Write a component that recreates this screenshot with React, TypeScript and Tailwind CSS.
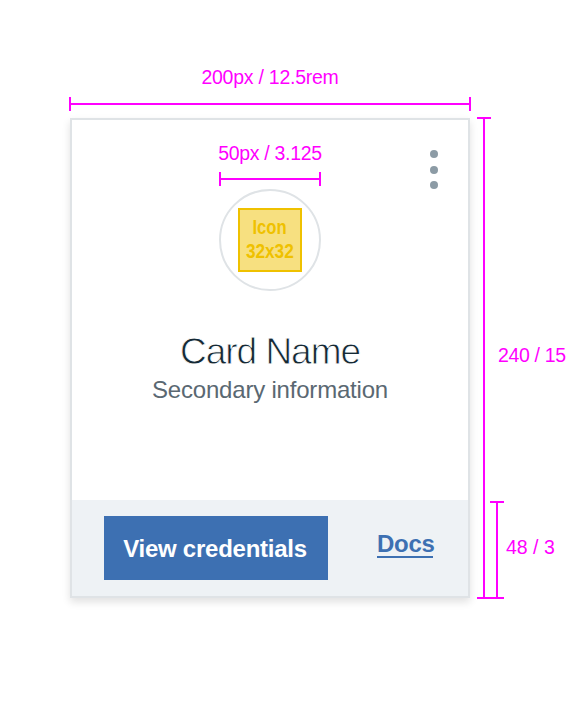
import React from "react";

function HorizontalRuler({ width }: { width: string }) {
  return (
    <div className={`flex h-[14px] items-center ${width}`}>
      <i className="h-full w-[2px] bg-[#ff00ff]" />
      <i className="h-[2px] flex-1 bg-[#ff00ff]" />
      <i className="h-full w-[2px] bg-[#ff00ff]" />
    </div>
  );
}

function VerticalRuler({ height }: { height: string }) {
  return (
    <div className={`flex w-[14px] flex-col items-center ${height}`}>
      <i className="h-[2px] w-full bg-[#ff00ff]" />
      <i className="w-[2px] flex-1 bg-[#ff00ff]" />
      <i className="h-[2px] w-full bg-[#ff00ff]" />
    </div>
  );
}

function Card() {
  return (
    <section className="flex h-[480px] w-[400px] shrink-0 flex-col border-2 border-[#dfe3e6] bg-white shadow-[0_4px_8px_rgba(0,0,0,0.12)]">
      <div className="flex h-[380px] flex-col items-center">
        <header className="grid h-[169px] w-full grid-cols-[1fr_102px_1fr]">
          <span />
          <div className="flex flex-col items-center pt-[22px]">
            <span className="h-[22px] whitespace-nowrap text-[19.5px] leading-[22px] tracking-[-0.3px] text-[#ff00ff]">50px / 3.125</span>
            <div className="mt-[8px]">
              <HorizontalRuler width="w-[102px]" />
            </div>
            <div className="mt-[3px] flex size-[102px] shrink-0 items-center justify-center rounded-full border-2 border-[#dfe3e6]">
              <div className="flex size-16 flex-col items-center justify-center border-2 border-[#efc100] bg-[#f7e080] pb-[2px] text-[20px] leading-6 font-bold text-[#efc100]">
                <span className="scale-x-[0.83]">Icon</span>
                <span className="scale-x-[0.86]">32x32</span>
              </div>
            </div>
          </div>
          <button className="mt-[30px] mr-[30px] flex h-[39px] w-2 flex-col justify-between justify-self-end" aria-label="More options">
            <i className="size-2 rounded-full bg-[#8c9ba5]" />
            <i className="size-2 rounded-full bg-[#8c9ba5]" />
            <i className="size-2 rounded-full bg-[#8c9ba5]" />
          </button>
        </header>
        <h1 className="mt-[42px] text-[37px] leading-[42px] font-normal tracking-[-1px] text-[#152935] [-webkit-text-stroke:0.8px_white]">Card Name</h1>
        <p className="mt-[3px] text-[24px] leading-7 tracking-[-0.2px] text-[#5a6872]">Secondary information</p>
      </div>
      <footer className="flex h-24 bg-[#eef2f5] pt-4 pl-8">
        <button className="h-16 w-56 bg-[#3d70b2] pt-[2px] pr-[2px] text-[24px] leading-7 font-bold tracking-[-0.25px] text-white">View credentials</button>
        <a className="mt-[14px] ml-[49px] h-7 w-14 border-b-2 border-[#3d70b2] text-[24px] leading-7 font-bold tracking-[-0.3px] whitespace-nowrap text-[#3d70b2]">Docs</a>
      </footer>
    </section>
  );
}

export default function App() {
  return (
    <main className="h-[716px] w-[580px] overflow-hidden bg-white pt-[66px] font-['Liberation_Sans',Arial,sans-serif]">
      <div className="ml-[69px] flex w-[402px] flex-col items-center">
        <span className="h-[22px] text-[19.5px] leading-[22px] tracking-[-0.25px] text-[#ff00ff]">200px / 12.5rem</span>
        <div className="mt-[9px]">
          <HorizontalRuler width="w-[402px]" />
        </div>
      </div>
      <div className="mt-[6px] ml-[70px] flex h-[482px]">
        <div className="pt-px">
          <Card />
        </div>
        <div className="ml-[7px]">
          <VerticalRuler height="h-[482px]" />
        </div>
        <div className="-ml-px flex flex-col">
          <span className="mt-[227px] ml-[8px] h-[22px] whitespace-nowrap text-[19.5px] leading-[22px] tracking-[-0.35px] text-[#ff00ff]">240 / 15</span>
          <div className="mt-[135px] flex">
            <VerticalRuler height="h-[98px]" />
            <span className="mt-[35px] ml-[2px] whitespace-nowrap text-[19.5px] leading-[22px] text-[#ff00ff]">48 / 3</span>
          </div>
        </div>
      </div>
    </main>
  );
}
